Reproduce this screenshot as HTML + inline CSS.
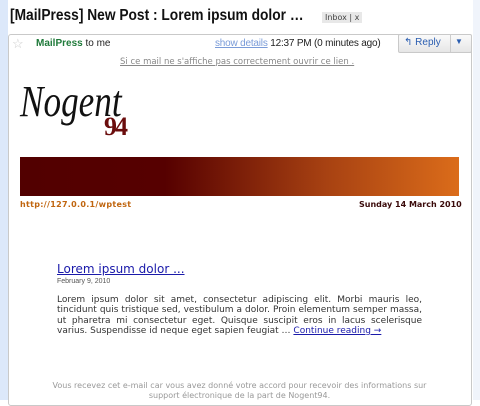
<!DOCTYPE html>
<html><head><style>
body{margin:0;width:480px;height:400px;overflow:hidden;background:#fff;font-family:"Liberation Sans",sans-serif;position:relative}
.a{position:absolute;white-space:nowrap}
</style></head><body>
<div class="a" style="left:0;top:0;width:8px;height:400px;background:#dce8fa"></div>
<div class="a" style="left:473px;top:0;width:7px;height:400px;background:#f0f4fb"></div>
<div class="a" style="left:10px;top:7px;font-size:16px;font-weight:bold;color:#111;transform:scaleX(0.86);transform-origin:left">[MailPress] New Post : Lorem ipsum dolor …</div>
<div class="a" style="left:322px;top:12px;font-size:8px;background:#e8e8e8;color:#444;padding:1px 3px;font-family:'DejaVu Sans'">Inbox | x</div>
<div class="a" style="left:8px;top:34px;width:462px;height:370px;border:1px solid #c9c9c9;border-radius:3px"></div>
<div class="a" style="left:12px;top:36px;font-size:13px;color:#ccc">☆</div>
<div class="a" style="left:36px;top:38px;font-size:10px;color:#222"><b style="color:#1f7a3a">MailPress</b> to me</div>
<div class="a" style="left:215px;top:38px;font-size:10px;color:#222;letter-spacing:-0.2px"><span style="color:#7a9bd8;text-decoration:underline">show details</span> 12:37 PM (0 minutes ago)</div>
<div class="a" style="left:398px;top:34px;width:72px;height:17px;background:linear-gradient(#fafafa,#e6e6e6);border:1px solid #c9c9c9;border-radius:2px"></div>
<div class="a" style="left:404px;top:37px;font-size:10px;color:#2a5db0">↰ Reply</div>
<div class="a" style="left:450px;top:34px;width:1px;height:18px;background:#ccc"></div>
<div class="a" style="left:455px;top:37px;font-size:8px;color:#2a5db0">▼</div>
<div class="a" style="left:120px;top:57px;font-size:8.5px;color:#888;text-decoration:underline;font-family:'DejaVu Sans'">Si ce mail ne s'affiche pas correctement ouvrir ce lien .</div>
<div class="a" style="left:20px;top:76px;font-size:44px;font-style:italic;font-family:'Liberation Serif',serif;color:#111;transform:scaleX(0.8);transform-origin:left">Nogent</div>
<div class="a" style="left:104px;top:112px;font-size:26px;font-weight:bold;font-family:'Liberation Serif',serif;color:#6b0d0d;letter-spacing:-2px">94</div>
<div class="a" style="left:20px;top:157px;width:439px;height:39px;background:linear-gradient(90deg,#520000 0%,#560000 33%,#a84212 70%,#db6c1a 100%)"></div>
<div class="a" style="left:20px;top:200px;font-size:8px;font-weight:bold;color:#c0650f;font-family:'DejaVu Sans';letter-spacing:0.3px">http://127.0.0.1/wptest</div>
<div class="a" style="left:359px;top:200px;font-size:8px;font-weight:bold;color:#3a0a0a;font-family:'DejaVu Sans'">Sunday 14 March 2010</div>
<div class="a" style="left:57px;top:262px;font-size:12px;color:#1a1aaa;text-decoration:underline;font-family:'DejaVu Sans'">Lorem ipsum dolor ...</div>
<div class="a" style="left:57px;top:278px;font-size:7px;color:#555">February 9, 2010</div>
<div class="a" style="left:57px;top:295px;width:365px;white-space:normal;font-size:9px;line-height:10.3px;color:#333;text-align:justify;font-family:'DejaVu Sans'">Lorem ipsum dolor sit amet, consectetur adipiscing elit. Morbi mauris leo, tincidunt quis tristique sed, vestibulum a dolor. Proin elementum semper massa, ut pharetra mi consectetur eget. Quisque suscipit eros in lacus scelerisque varius. Suspendisse id neque eget sapien feugiat … <span style="color:#1a1aaa;text-decoration:underline">Continue reading →</span></div>
<div class="a" style="left:20px;top:381px;width:439px;text-align:center;font-size:8px;line-height:9.5px;color:#999;font-family:'DejaVu Sans'">Vous recevez cet e-mail car vous avez donné votre accord pour recevoir des informations sur<br>support électronique de la part de Nogent94.</div>
</body></html>
